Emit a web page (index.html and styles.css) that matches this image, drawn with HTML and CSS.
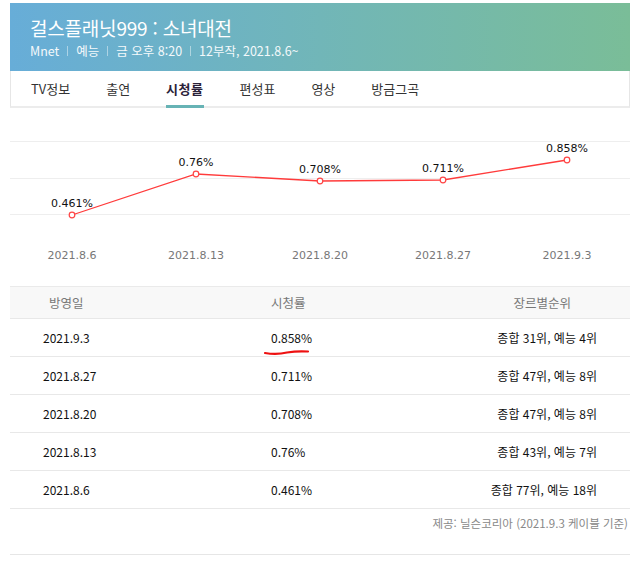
FILE: index.html
```html
<!DOCTYPE html>
<html lang="ko">
<head>
<meta charset="utf-8">
<link rel="stylesheet" href="styles.css">
</head>
<body>
<div class="wrap">
  <div class="hero">
    <h1 class="title">걸스플래닛999 : 소녀대전</h1>
    <div class="meta">
      <span>Mnet</span><i class="sep"></i><span>예능</span><i class="sep"></i><span>금 오후 8:20</span><i class="sep"></i><span>12부작, 2021.8.6~</span>
    </div>
  </div>
  <nav class="tabs">
    <a class="tab">TV정보</a>
    <a class="tab">출연</a>
    <a class="tab active">시청률</a>
    <a class="tab">편성표</a>
    <a class="tab">영상</a>
    <a class="tab">방금그곡</a>
  </nav>
  <div class="chart">
    <svg width="620" height="178" viewBox="0 0 620 178">
      <g stroke="#eeeeee" stroke-width="1">
        <line x1="0" y1="33.5" x2="620" y2="33.5"/>
        <line x1="0" y1="70.5" x2="620" y2="70.5"/>
        <line x1="0" y1="106.5" x2="620" y2="106.5"/>
      </g>
      <polyline points="62,107 186,66 310,73 433,72 557,52" fill="none" stroke="#ff3b3b" stroke-width="1.3"/>
      <g fill="#fff" stroke="#ff4545" stroke-width="1.2">
        <circle cx="62" cy="107" r="2.8"/>
        <circle cx="186" cy="66" r="2.8"/>
        <circle cx="310" cy="73" r="2.8"/>
        <circle cx="433" cy="72" r="2.8"/>
        <circle cx="557" cy="52" r="2.8"/>
      </g>
      <g class="vals" text-anchor="middle">
        <text x="62" y="99">0.461%</text>
        <text x="186" y="58">0.76%</text>
        <text x="310" y="65">0.708%</text>
        <text x="433" y="64">0.711%</text>
        <text x="557" y="44">0.858%</text>
      </g>
      <g class="axis" text-anchor="middle">
        <text x="62" y="151">2021.8.6</text>
        <text x="186" y="151">2021.8.13</text>
        <text x="310" y="151">2021.8.20</text>
        <text x="433" y="151">2021.8.27</text>
        <text x="557" y="151">2021.9.3</text>
      </g>
    </svg>
  </div>
  <div class="table">
    <div class="row head">
      <div class="c1">방영일</div><div class="c2">시청률</div><div class="c3">장르별순위</div>
    </div>
    <div class="row">
      <div class="c1">2021.9.3</div>
      <div class="c2 marked">0.858%
        <svg class="scribble" width="48" height="8" viewBox="0 0 48 8"><path d="M2 5 C10 6.5 18 6 24 4.5 C30 3.5 38 3 45 3.5" fill="none" stroke="#ee1111" stroke-width="2.2" stroke-linecap="round"/></svg>
      </div>
      <div class="c3">종합 31위, 예능 4위</div>
    </div>
    <div class="row"><div class="c1">2021.8.27</div><div class="c2">0.711%</div><div class="c3">종합 47위, 예능 8위</div></div>
    <div class="row"><div class="c1">2021.8.20</div><div class="c2">0.708%</div><div class="c3">종합 47위, 예능 8위</div></div>
    <div class="row"><div class="c1">2021.8.13</div><div class="c2">0.76%</div><div class="c3">종합 43위, 예능 7위</div></div>
    <div class="row"><div class="c1">2021.8.6</div><div class="c2">0.461%</div><div class="c3">종합 77위, 예능 18위</div></div>
  </div>
  <p class="source">제공: 닐슨코리아 (2021.9.3 케이블 기준)</p>
</div>
</body>
</html>
```
FILE: styles.css
```css
html, body {
  margin: 0;
  padding: 0;
  background: #fff;
}
body {
  font-family: "Noto Sans CJK KR", "Noto Sans", sans-serif;
  color: #222;
}
.wrap {
  width: 620px;
  margin: 3px 0 0 10px;
}
.hero {
  height: 68px;
  box-sizing: border-box;
  padding: 13px 0 0 20px;
  background: linear-gradient(to right, #67add8 0%, #71b6b8 50%, #7abd98 100%);
  color: #fff;
}
.title {
  margin: 0;
  font-size: 19px;
  font-weight: 400;
  line-height: 24px;
  letter-spacing: -0.2px;
}
.meta {
  margin-top: 2px;
  font-size: 12.5px;
  line-height: 18px;
  display: flex;
  align-items: center;
  color: #f4f9fb;
}
.sep {
  display: inline-block;
  width: 1px;
  height: 10px;
  background: rgba(255,255,255,0.45);
  margin: 0 8px;
}
.tabs {
  display: flex;
  gap: 36px;
  height: 37px;
  box-sizing: border-box;
  padding-left: 20px;
  border: 1px solid #e6e6e6;
  border-top: 0;
  border-bottom: 2px solid #ececec;
}
.tab {
  display: block;
  font-size: 13px;
  line-height: 35px;
  color: #333;
  text-decoration: none;
  position: relative;
}
.tab.active {
  font-weight: 700;
  color: #2a2138;
  letter-spacing: 0.5px;
}
.tab.active::after {
  content: "";
  position: absolute;
  left: 0;
  right: 0;
  bottom: -2px;
  height: 3px;
  background: #67b3b5;
}
.chart {
  height: 178px;
}
.chart svg {
  display: block;
}
.vals text {
  font-family: "DejaVu Sans", sans-serif;
  font-size: 11px;
  fill: #111;
}
.axis text {
  font-family: "DejaVu Sans", sans-serif;
  font-size: 11px;
  fill: #777;
}
.table {
  border-top: 1px solid #eaeaea;
}
.row {
  display: grid;
  grid-template-columns: 261px 200px 1fr;
  height: 38px;
  box-sizing: border-box;
  align-items: center;
  border-bottom: 1px solid #e8e8e8;
  font-size: 12px;
  color: #111;
}
.row.head {
  height: 32px;
  background: #f8f8f8;
  color: #777;
  font-size: 12.5px;
}
.c1 { padding-left: 33px; }
.c3 { text-align: right; padding-right: 33px; }
.head .c1 { padding-left: 39px; }
.head .c3 { padding-right: 59px; }
.marked {
  position: relative;
}
.scribble {
  position: absolute;
  left: -8px;
  top: 19px;
}
.source {
  margin: 0;
  height: 46px;
  box-sizing: border-box;
  padding: 6px 2px 0 0;
  text-align: right;
  font-size: 11.5px;
  color: #888;
  border-bottom: 1px solid #e6e6e6;
}
```
